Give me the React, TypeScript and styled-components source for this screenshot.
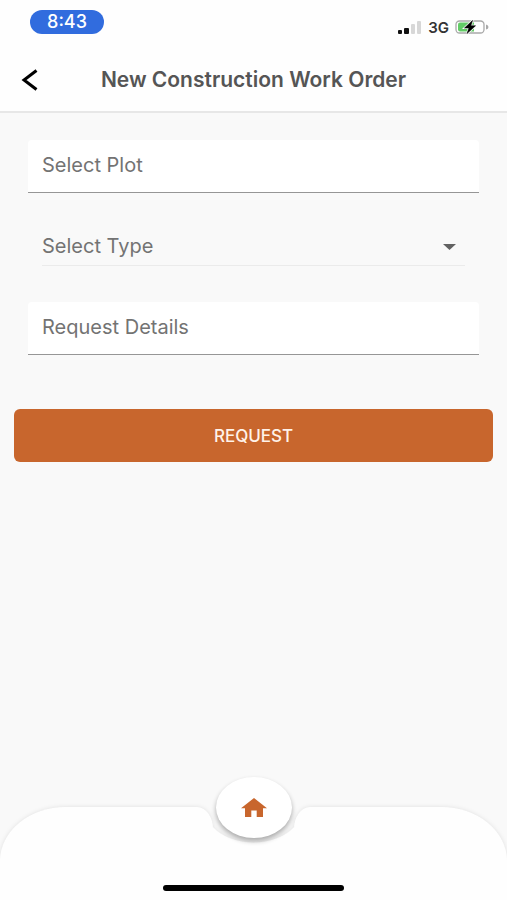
import React from "react";
import styled, { createGlobalStyle } from "styled-components";

const GlobalStyle = createGlobalStyle`
  * { box-sizing: border-box; }
  body { margin: 0; background: #f9f9f9; }
  body, button, input, select { font-family: Inter, "Liberation Sans", sans-serif; }
`;

const Screen = styled.div`
  min-height: 100vh;
  display: flex;
  flex-direction: column;
  background: #f9f9f9;
`;

const StatusBar = styled.div`
  display: flex;
  justify-content: space-between;
  align-items: flex-start;
  height: 48px;
  padding: 10px 18px 0 30px;
  background: #fefefe;
`;

const Clock = styled.time`
  width: 74px;
  height: 24px;
  border-radius: 12px;
  background: #316cde;
  color: #fff;
  font-size: 18px;
  font-weight: 500;
  line-height: 24px;
  text-align: center;
`;

const StatusIcons = styled.div`
  display: flex;
  align-items: center;
  gap: 6px;
  height: 34px;
  color: #333;
  font-size: 15px;
  font-weight: 600;
`;

const Header = styled.header`
  display: grid;
  grid-template-columns: 60px 1fr 60px;
  align-items: center;
  height: 65px;
  background: #fefefe;
  border-bottom: 2px solid #e7e7e7;
`;

const BackButton = styled.button`
  display: flex;
  align-items: center;
  justify-content: center;
  height: 48px;
  padding: 0;
  border: 0;
  background: transparent;
`;

const Title = styled.h1`
  margin: 0;
  color: #555;
  font-size: 21px;
  font-weight: 600;
  line-height: 24px;
  text-align: center;
  white-space: nowrap;
`;

const Form = styled.form`
  flex: 1;
  display: flex;
  flex-direction: column;
  padding: 27px 14px 32px;
`;

const Fields = styled.div`
  display: flex;
  flex-direction: column;
  gap: 36px;
  padding: 0 14px;
`;

const TextField = styled.input`
  width: 100%;
  height: 53px;
  padding: 0 14px 2px;
  border: 0;
  border-bottom: 1px solid #969696;
  border-radius: 4px 4px 0 0;
  background: #fff;
  color: #333;
  font-size: 20px;
  outline: none;
  &::placeholder { color: #737373; opacity: 1; }
`;

const SelectField = styled.div`
  display: grid;
  align-items: center;
  margin: 0 14px;
  height: 37px;
  border-bottom: 1px solid #ebebeb;

  > * { grid-area: 1 / 1; }
  > svg { justify-self: end; margin-right: 9px; pointer-events: none; }
`;

const Select = styled.select`
  width: 100%;
  height: 36px;
  padding: 0 0 2px;
  border: 0;
  appearance: none;
  background: transparent;
  color: #737373;
  font-size: 20px;
  outline: none;
`;

const RequestButton = styled.button`
  height: 53px;
  margin-top: 54px;
  border: 0;
  border-radius: 6px;
  background: #c8662d;
  color: #fff2e9;
  font-size: 17px;
  font-weight: 500;
`;

const BottomNav = styled.nav`
  display: grid;
  justify-items: center;
  height: 93px;

  > * { grid-area: 1 / 1; }
`;

const Bar = styled.div`
  display: flex;
  width: 100%;
  height: 93px;
  filter: drop-shadow(0 0 2px rgba(0, 0, 0, 0.1));
`;

const BarSide = styled.div<{ $side: "left" | "right" }>`
  flex: 1;
  background: #fefefe;
  border-radius: ${({ $side }) =>
    $side === "left" ? "66px 16px 0 0 / 54px 22px 0 0" : "16px 66px 0 0 / 22px 54px 0 0"};
`;

const BarNotch = styled.div`
  width: 81px;
  background: radial-gradient(ellipse 50px 36px at 50% 0, transparent 97%, #fefefe 100%);
`;

const HomeButton = styled.button`
  display: flex;
  align-items: center;
  justify-content: center;
  z-index: 1;
  width: 76px;
  height: 61px;
  margin-top: -30px;
  padding: 0;
  border: 0;
  border-radius: 50%;
  background: #fff;
  box-shadow: 0 3px 5px rgba(0, 0, 0, 0.32);
`;

const HomeIndicator = styled.div`
  z-index: 1;
  align-self: end;
  width: 181px;
  height: 6px;
  margin-bottom: 9px;
  border-radius: 3px;
  background: #000;
`;

const SignalIcon = () => (
  <svg width="24" height="13" viewBox="0 0 24 13" aria-hidden="true">
    <rect x="0" y="9" width="4" height="4" rx="1" fill="#111" />
    <rect x="6" y="7" width="5" height="6" rx="1" fill="#111" />
    <rect x="13" y="3" width="4" height="10" rx="1" fill="#d7d7d7" />
    <rect x="19" y="0" width="4" height="13" rx="1" fill="#d7d7d7" />
  </svg>
);

const BatteryIcon = () => (
  <svg width="34" height="14" viewBox="0 0 34 14" aria-hidden="true">
    <rect x="1" y="1" width="28" height="12" rx="3.5" fill="#fff" stroke="#a9a9a9" strokeWidth="1.3" />
    <path d="M5 2.500H19v9H5Q3 11.500 3 9.500v-5q0-2 2-2Z" fill="#62cb66" />
    <path d="M31 4.500q2.500.5 2.500 2.500T31 9.500Z" fill="#a9a9a9" />
    <path d="M17.500 0.500 9.500 8H14l-2 5.500L20.500 5.800h-4.700Z" fill="#fff" stroke="#fff" strokeWidth="2" />
    <path d="M17.500 0.500 9.500 8H14l-2 5.500L20.500 5.800h-4.700Z" fill="#000" stroke="#000" strokeWidth="0.6" />
  </svg>
);

const BackIcon = () => (
  <svg width="18" height="22" viewBox="0 0 18 22" fill="none" stroke="#000" strokeWidth="3" aria-hidden="true">
    <path d="M15.500 1.500 3 11l12.500 9.500" />
  </svg>
);

const ArrowIcon = () => (
  <svg width="13" height="6" viewBox="0 0 13 6" aria-hidden="true">
    <path d="M0 0h13L6.500 6Z" fill="#626262" />
  </svg>
);

const HomeIcon = () => (
  <svg width="26" height="19" viewBox="0 0 26 19" aria-hidden="true">
    <path d="M13 0 0 10.200h4V19h6.300v-6.500h5.400V19H22v-8.800h4Z" fill="#c8662d" />
  </svg>
);

export default function App() {
  return (
    <Screen>
      <GlobalStyle />
      <StatusBar>
        <Clock>8:43</Clock>
        <StatusIcons>
          <SignalIcon />
          <span>3G</span>
          <BatteryIcon />
        </StatusIcons>
      </StatusBar>
      <Header>
        <BackButton type="button" aria-label="Back">
          <BackIcon />
        </BackButton>
        <Title>New Construction Work Order</Title>
      </Header>
      <Form onSubmit={(event) => event.preventDefault()}>
        <Fields>
          <TextField type="text" aria-label="Select Plot" placeholder="Select Plot" />
          <SelectField>
            <Select aria-label="Select Type" defaultValue="">
              <option value="">Select Type</option>
            </Select>
            <ArrowIcon />
          </SelectField>
          <TextField type="text" aria-label="Request Details" placeholder="Request Details" />
        </Fields>
        <RequestButton type="submit">REQUEST</RequestButton>
      </Form>
      <BottomNav>
        <Bar>
          <BarSide $side="left" />
          <BarNotch />
          <BarSide $side="right" />
        </Bar>
        <HomeButton type="button" aria-label="Home">
          <HomeIcon />
        </HomeButton>
        <HomeIndicator />
      </BottomNav>
    </Screen>
  );
}
